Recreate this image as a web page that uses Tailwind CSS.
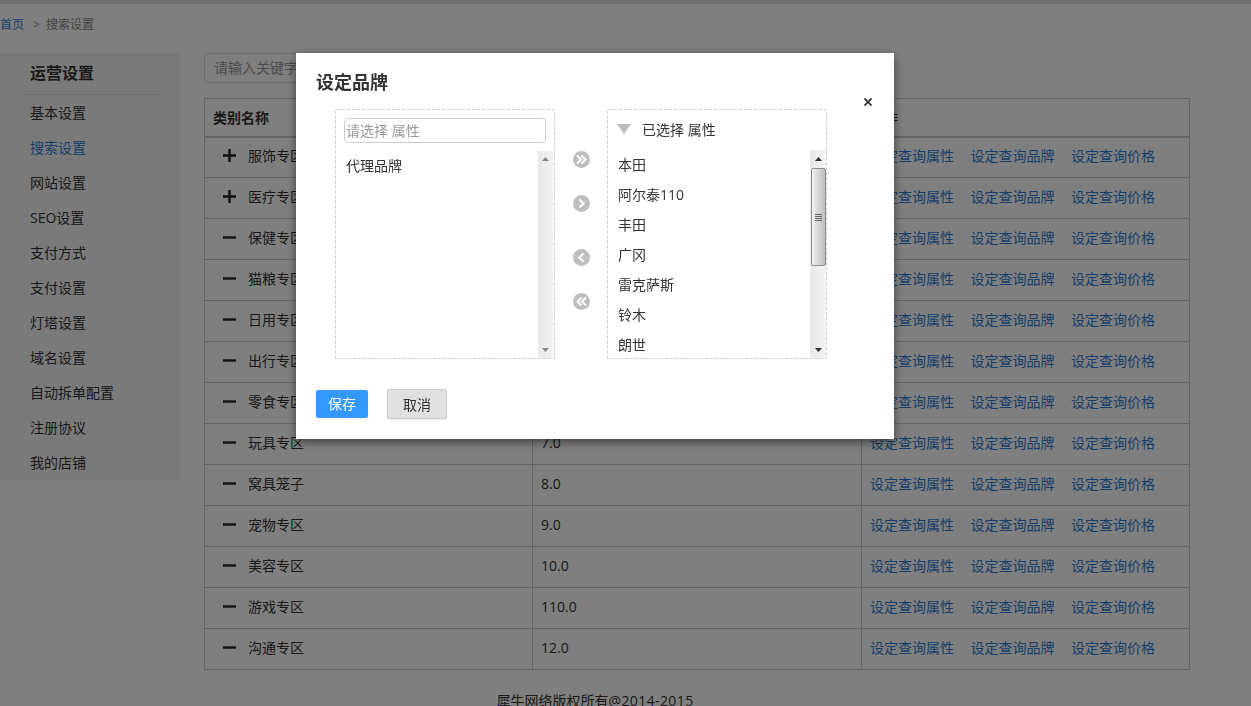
<!DOCTYPE html>
<html lang="zh-CN">
<head>
    <meta charset="UTF-8">
    <title>搜索设置</title>
    <script src="https://cdn.jsdelivr.net/npm/@tailwindcss/browser@4"></script>
</head>
<body class="h-[706px] overflow-hidden bg-white text-[14px] text-[#333] font-['Open_Sans','Noto_Sans_CJK_SC',sans-serif]">

    <div class="h-[4px] bg-[#e0e0e0]"></div>
    <div class="flex h-[49px] items-center pb-[7px] text-[12px]">
        <a class="text-[#2f7fd6]">首页</a>
        <span class="ml-[9px] text-[#999]">&gt;</span>
        <span class="ml-[6px] text-[#888]">搜索设置</span>
    </div>

    <div class="flex items-start">
        <!-- sidebar -->
        <aside class="w-[180px] h-[427px] shrink-0 bg-[#f5f5f5]">
            <div class="mx-[20px] h-[42px] border-b border-[#e5e5e5] pl-[10px] pt-[8px] text-[16px] font-bold leading-[24px]">运营设置</div>
            <ul class="pl-[30px] leading-[35px]">
                <li>基本设置</li>
                <li class="text-[#2f7fd6]">搜索设置</li>
                <li>网站设置</li>
                <li>SEO设置</li>
                <li>支付方式</li>
                <li>支付设置</li>
                <li>灯塔设置</li>
                <li>域名设置</li>
                <li>自动拆单配置</li>
                <li>注册协议</li>
                <li>我的店铺</li>
            </ul>
        </aside>

        <main class="ml-[24px] w-[986px]">
            <div class="h-[30px] w-[200px] rounded-[3px] border border-[#ddd] pl-[9px] leading-[28px] text-[#999]">请输入关键字</div>
            <table class="mt-[15px] w-[986px] table-fixed border-collapse border border-[#ccc]">
                <colgroup><col class="w-[328px]"><col class="w-[329px]"><col></colgroup>
                <thead>
                    <tr class="h-[38px] border-b-2 border-[#ccc] text-left">
                        <th class="border-r border-[#ccc] pl-[8px] font-bold">类别名称</th>
                        <th class="border-r border-[#ccc] pl-[8px] font-bold">排序</th>
                        <th class="pl-[8px] font-normal">操作</th>
                    </tr>
                </thead>
                <tbody class="[&_td]:pb-[3px]">
                    <tr class="h-[41px] border-b border-[#ccc]"><td class="border-r border-[#ccc]"><div class="flex items-center pl-[18px]"><svg class="w-[13px] h-[13px] mr-[12px]" viewBox="0 0 13 13"><path d="M0 6.5H13M6.5 0V13" stroke="#222" stroke-width="2.4"/></svg>服饰专区</div></td><td class="border-r border-[#ccc] pl-[8px]">1.0</td><td class="pl-[8px] text-[#2f7fd6]"><div class="flex gap-[16.5px]"><a>设定查询属性</a><a>设定查询品牌</a><a>设定查询价格</a></div></td></tr>
                    <tr class="h-[41px] border-b border-[#ccc]"><td class="border-r border-[#ccc]"><div class="flex items-center pl-[18px]"><svg class="w-[13px] h-[13px] mr-[12px]" viewBox="0 0 13 13"><path d="M0 6.5H13M6.5 0V13" stroke="#222" stroke-width="2.4"/></svg>医疗专区</div></td><td class="border-r border-[#ccc] pl-[8px]">2.0</td><td class="pl-[8px] text-[#2f7fd6]"><div class="flex gap-[16.5px]"><a>设定查询属性</a><a>设定查询品牌</a><a>设定查询价格</a></div></td></tr>
                    <tr class="h-[41px] border-b border-[#ccc]"><td class="border-r border-[#ccc]"><div class="flex items-center pl-[18px]"><svg class="w-[13px] h-[13px] mr-[12px]" viewBox="0 0 13 13"><path d="M0 6.5H13" stroke="#222" stroke-width="2.4"/></svg>保健专区</div></td><td class="border-r border-[#ccc] pl-[8px]">3.0</td><td class="pl-[8px] text-[#2f7fd6]"><div class="flex gap-[16.5px]"><a>设定查询属性</a><a>设定查询品牌</a><a>设定查询价格</a></div></td></tr>
                    <tr class="h-[41px] border-b border-[#ccc]"><td class="border-r border-[#ccc]"><div class="flex items-center pl-[18px]"><svg class="w-[13px] h-[13px] mr-[12px]" viewBox="0 0 13 13"><path d="M0 6.5H13" stroke="#222" stroke-width="2.4"/></svg>猫粮专区</div></td><td class="border-r border-[#ccc] pl-[8px]">4.0</td><td class="pl-[8px] text-[#2f7fd6]"><div class="flex gap-[16.5px]"><a>设定查询属性</a><a>设定查询品牌</a><a>设定查询价格</a></div></td></tr>
                    <tr class="h-[41px] border-b border-[#ccc]"><td class="border-r border-[#ccc]"><div class="flex items-center pl-[18px]"><svg class="w-[13px] h-[13px] mr-[12px]" viewBox="0 0 13 13"><path d="M0 6.5H13" stroke="#222" stroke-width="2.4"/></svg>日用专区</div></td><td class="border-r border-[#ccc] pl-[8px]">5.0</td><td class="pl-[8px] text-[#2f7fd6]"><div class="flex gap-[16.5px]"><a>设定查询属性</a><a>设定查询品牌</a><a>设定查询价格</a></div></td></tr>
                    <tr class="h-[41px] border-b border-[#ccc]"><td class="border-r border-[#ccc]"><div class="flex items-center pl-[18px]"><svg class="w-[13px] h-[13px] mr-[12px]" viewBox="0 0 13 13"><path d="M0 6.5H13" stroke="#222" stroke-width="2.4"/></svg>出行专区</div></td><td class="border-r border-[#ccc] pl-[8px]">6.0</td><td class="pl-[8px] text-[#2f7fd6]"><div class="flex gap-[16.5px]"><a>设定查询属性</a><a>设定查询品牌</a><a>设定查询价格</a></div></td></tr>
                    <tr class="h-[41px] border-b border-[#ccc]"><td class="border-r border-[#ccc]"><div class="flex items-center pl-[18px]"><svg class="w-[13px] h-[13px] mr-[12px]" viewBox="0 0 13 13"><path d="M0 6.5H13" stroke="#222" stroke-width="2.4"/></svg>零食专区</div></td><td class="border-r border-[#ccc] pl-[8px]">6.5</td><td class="pl-[8px] text-[#2f7fd6]"><div class="flex gap-[16.5px]"><a>设定查询属性</a><a>设定查询品牌</a><a>设定查询价格</a></div></td></tr>
                    <tr class="h-[41px] border-b border-[#ccc]"><td class="border-r border-[#ccc]"><div class="flex items-center pl-[18px]"><svg class="w-[13px] h-[13px] mr-[12px]" viewBox="0 0 13 13"><path d="M0 6.5H13" stroke="#222" stroke-width="2.4"/></svg>玩具专区</div></td><td class="border-r border-[#ccc] pl-[8px]">7.0</td><td class="pl-[8px] text-[#2f7fd6]"><div class="flex gap-[16.5px]"><a>设定查询属性</a><a>设定查询品牌</a><a>设定查询价格</a></div></td></tr>
                    <tr class="h-[41px] border-b border-[#ccc]"><td class="border-r border-[#ccc]"><div class="flex items-center pl-[18px]"><svg class="w-[13px] h-[13px] mr-[12px]" viewBox="0 0 13 13"><path d="M0 6.5H13" stroke="#222" stroke-width="2.4"/></svg>窝具笼子</div></td><td class="border-r border-[#ccc] pl-[8px]">8.0</td><td class="pl-[8px] text-[#2f7fd6]"><div class="flex gap-[16.5px]"><a>设定查询属性</a><a>设定查询品牌</a><a>设定查询价格</a></div></td></tr>
                    <tr class="h-[41px] border-b border-[#ccc]"><td class="border-r border-[#ccc]"><div class="flex items-center pl-[18px]"><svg class="w-[13px] h-[13px] mr-[12px]" viewBox="0 0 13 13"><path d="M0 6.5H13" stroke="#222" stroke-width="2.4"/></svg>宠物专区</div></td><td class="border-r border-[#ccc] pl-[8px]">9.0</td><td class="pl-[8px] text-[#2f7fd6]"><div class="flex gap-[16.5px]"><a>设定查询属性</a><a>设定查询品牌</a><a>设定查询价格</a></div></td></tr>
                    <tr class="h-[41px] border-b border-[#ccc]"><td class="border-r border-[#ccc]"><div class="flex items-center pl-[18px]"><svg class="w-[13px] h-[13px] mr-[12px]" viewBox="0 0 13 13"><path d="M0 6.5H13" stroke="#222" stroke-width="2.4"/></svg>美容专区</div></td><td class="border-r border-[#ccc] pl-[8px]">10.0</td><td class="pl-[8px] text-[#2f7fd6]"><div class="flex gap-[16.5px]"><a>设定查询属性</a><a>设定查询品牌</a><a>设定查询价格</a></div></td></tr>
                    <tr class="h-[41px] border-b border-[#ccc]"><td class="border-r border-[#ccc]"><div class="flex items-center pl-[18px]"><svg class="w-[13px] h-[13px] mr-[12px]" viewBox="0 0 13 13"><path d="M0 6.5H13" stroke="#222" stroke-width="2.4"/></svg>游戏专区</div></td><td class="border-r border-[#ccc] pl-[8px]">110.0</td><td class="pl-[8px] text-[#2f7fd6]"><div class="flex gap-[16.5px]"><a>设定查询属性</a><a>设定查询品牌</a><a>设定查询价格</a></div></td></tr>
                    <tr class="h-[41px] border-b border-[#ccc]"><td class="border-r border-[#ccc]"><div class="flex items-center pl-[18px]"><svg class="w-[13px] h-[13px] mr-[12px]" viewBox="0 0 13 13"><path d="M0 6.5H13" stroke="#222" stroke-width="2.4"/></svg>沟通专区</div></td><td class="border-r border-[#ccc] pl-[8px]">12.0</td><td class="pl-[8px] text-[#2f7fd6]"><div class="flex gap-[16.5px]"><a>设定查询属性</a><a>设定查询品牌</a><a>设定查询价格</a></div></td></tr>
                </tbody>
            </table>
        </main>
    </div>
    <footer class="mt-[20px] w-[1190px] text-center">犀牛网络版权所有<span class="tracking-[0.4px]">@2014-2015</span></footer>

    <!-- overlay + dialog -->
    <div class="fixed inset-0 bg-black/50"></div>
    <div class="fixed left-[296px] top-[53px] w-[598px] h-[386px] bg-white shadow-[0_3px_9px_rgba(0,0,0,0.5)]">
        <h2 class="pl-[20px] pt-[17px] text-[18px] font-bold leading-[25px]">设定品牌</h2>
        <svg class="absolute left-[568px] top-[45px] w-[8px] h-[8px]" viewBox="0 0 8 8"><path d="M0.5 0.5L7.5 7.5M7.5 0.5L0.5 7.5" stroke="#333" stroke-width="1.8"/></svg>

        <div class="mt-[14px] ml-[39px] flex">
            <!-- left list -->
            <div class="relative w-[220px] h-[250px] rounded-[2px] border border-dashed border-[#ccc]">
                <div class="mt-[8px] ml-[8px] h-[25px] w-[202px] rounded-[4px] border border-[#ccc] pl-[1px] leading-[23px] text-[#999]">请选择 属性</div>
                <div class="pl-[10px] pt-[13px] leading-[20px]">代理品牌</div>
                <div class="absolute right-[1px] bottom-0 top-[41px] flex w-[15px] flex-col items-center justify-between bg-[linear-gradient(to_right,#e8e8e8,#f3f3f3)] py-[6px]">
                    <svg class="w-[7px] h-[4px]" viewBox="0 0 7 4"><path d="M3.5 0L7 4H0Z" fill="#888"/></svg>
                    <svg class="w-[7px] h-[4px]" viewBox="0 0 7 4"><path d="M0 0H7L3.5 4Z" fill="#888"/></svg>
                </div>
            </div>

            <!-- move buttons -->
            <div class="w-[52px] pl-[18px] pt-[42px]">
                <svg class="w-[17px] h-[17px]" viewBox="0 0 17 17"><circle cx="8.5" cy="8.5" r="8.5" fill="#bfbfbf"/><path d="M4 4.5L8 8.5L4 12.5M8.5 4.5L12.5 8.5L8.5 12.5" fill="none" stroke="#fff" stroke-width="2"/></svg>
                <svg class="mt-[27px] w-[17px] h-[17px]" viewBox="0 0 17 17"><circle cx="8.5" cy="8.5" r="8.5" fill="#bfbfbf"/><path d="M6.5 4.5L10.5 8.5L6.5 12.5" fill="none" stroke="#fff" stroke-width="2.2"/></svg>
                <svg class="mt-[37px] w-[17px] h-[17px]" viewBox="0 0 17 17"><circle cx="8.5" cy="8.5" r="8.5" fill="#bfbfbf"/><path d="M10.5 4.5L6.5 8.5L10.5 12.5" fill="none" stroke="#fff" stroke-width="2.2"/></svg>
                <svg class="mt-[27px] w-[17px] h-[17px]" viewBox="0 0 17 17"><circle cx="8.5" cy="8.5" r="8.5" fill="#bfbfbf"/><path d="M8.5 4.5L4.5 8.5L8.5 12.5M13 4.5L9 8.5L13 12.5" fill="none" stroke="#fff" stroke-width="2"/></svg>
            </div>

            <!-- right list -->
            <div class="relative w-[220px] h-[250px] overflow-hidden rounded-[2px] border border-dashed border-[#ccc]">
                <div class="flex h-[40px] items-center pb-[2px] pl-[9px]">
                    <svg class="w-[14px] h-[10px]" viewBox="0 0 14 10"><path d="M0 0H14L7 10Z" fill="#bdbdbd"/></svg>
                    <span class="ml-[11px]">已选择 属性</span>
                </div>
                <ul class="pl-[10px] leading-[30px]">
                    <li>本田</li>
                    <li>阿尔泰110</li>
                    <li>丰田</li>
                    <li>广冈</li>
                    <li>雷克萨斯</li>
                    <li>铃木</li>
                    <li>朗世</li>
                </ul>
                <div class="absolute right-0 bottom-0 top-[40px] flex w-[16px] flex-col items-center bg-[linear-gradient(to_right,#e8e8e8,#f3f3f3)]">
                    <svg class="mt-[7px] w-[7px] h-[4px]" viewBox="0 0 7 4"><path d="M3.5 0L7 4H0Z" fill="#333"/></svg>
                    <div class="mt-[7px] flex h-[98px] w-[15px] flex-col items-center justify-center gap-[1px] rounded-[2px] border border-[#8f8f8f] bg-[linear-gradient(to_right,#f2f2f2,#d8d8d8_45%,#bdbdbd)]">
                        <span class="h-[1px] w-[7px] bg-[#666]"></span>
                        <span class="h-[1px] w-[7px] bg-[#666]"></span>
                        <span class="h-[1px] w-[7px] bg-[#666]"></span>
                        <span class="h-[1px] w-[7px] bg-[#666]"></span>
                    </div>
                    <svg class="mt-auto mb-[6px] w-[7px] h-[4px]" viewBox="0 0 7 4"><path d="M0 0H7L3.5 4Z" fill="#333"/></svg>
                </div>
            </div>
        </div>

        <div class="mt-[30px] ml-[20px] flex items-center">
            <button class="h-[28px] w-[52px] rounded-[2px] bg-[#3399ff] pb-[1px] text-white">保存</button>
            <button class="ml-[19px] h-[30px] w-[60px] rounded-[2px] border border-[#ccc] bg-[#e0e0e0] shadow-[0_1px_2px_rgba(0,0,0,0.1)]">取消</button>
        </div>
    </div>
</body>
</html>
